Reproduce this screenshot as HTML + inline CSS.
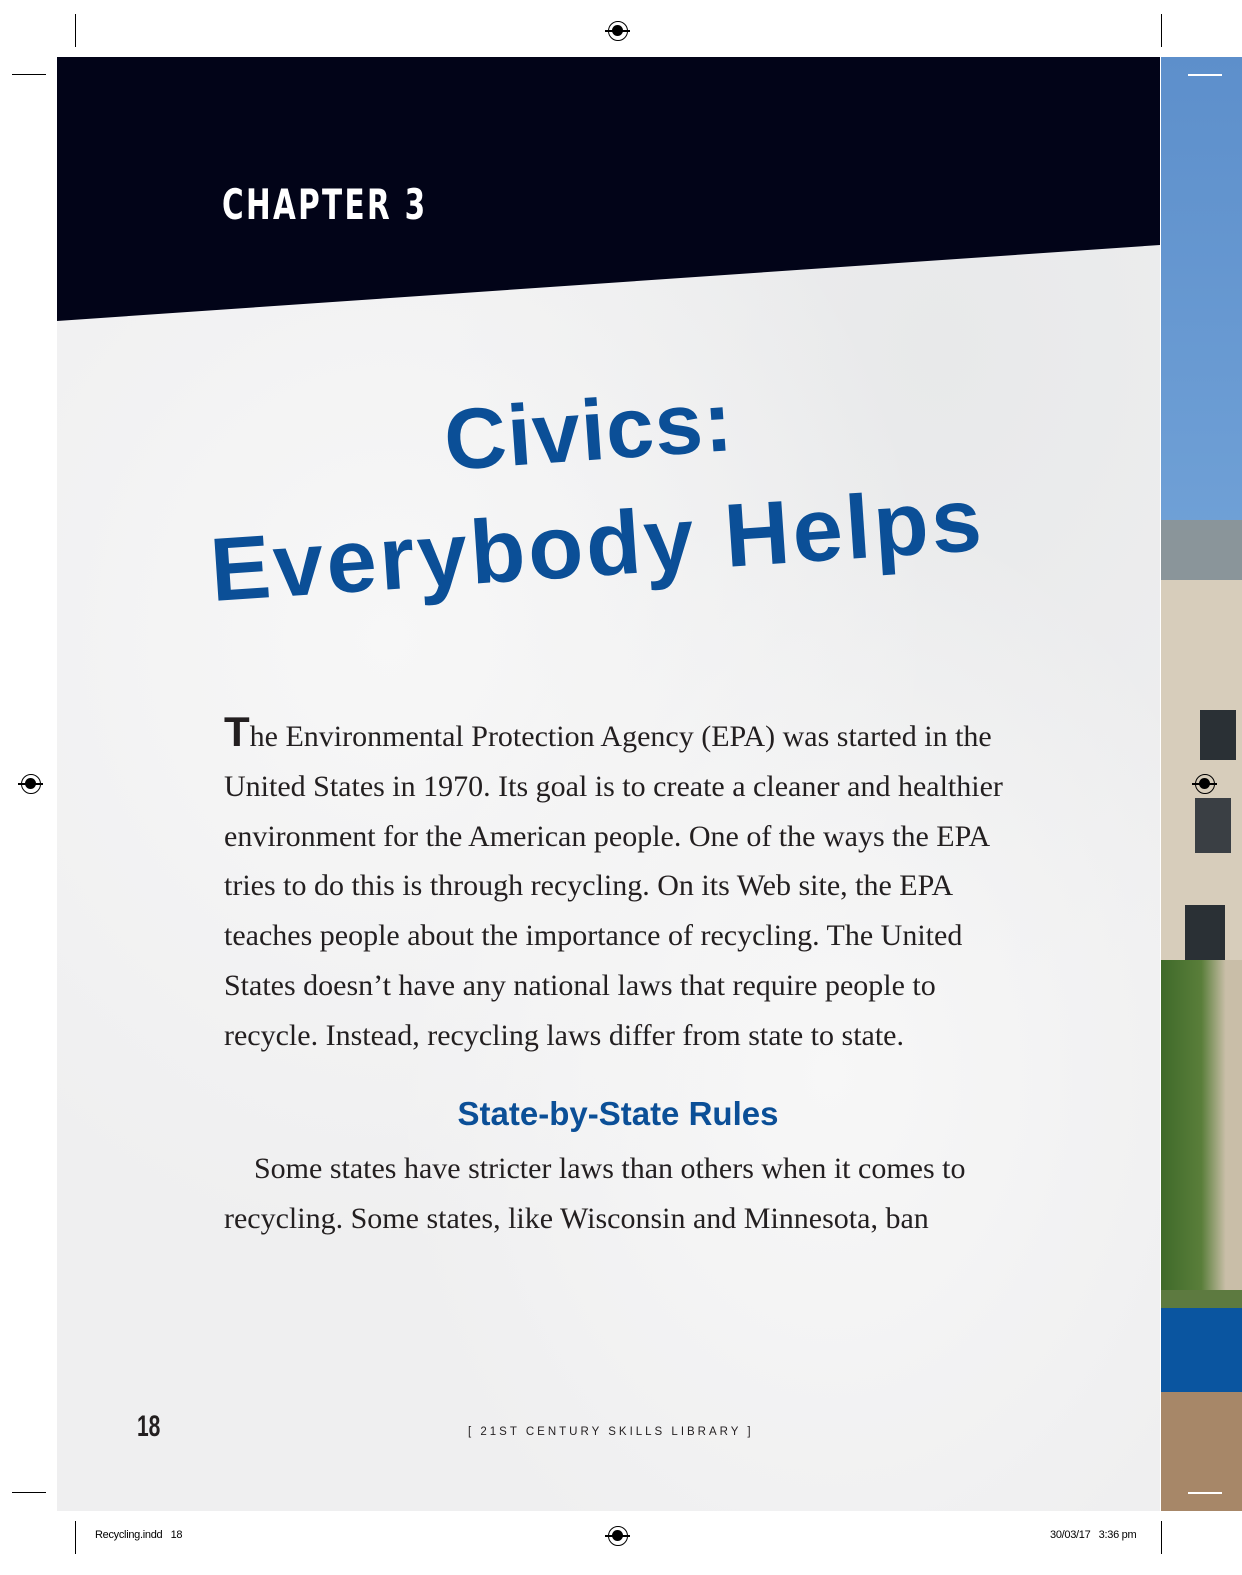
<!DOCTYPE html>
<html><head><meta charset="utf-8"><style>
body{margin:0;width:1242px;height:1575px;position:relative;background:#fff;overflow:hidden;font-family:"Liberation Sans",sans-serif}
.a{position:absolute}
.page{left:57px;top:57px;width:1103px;height:1454px;background:#efeff0;background-image:radial-gradient(ellipse at 30% 40%,#f7f7f7 0,transparent 50%),radial-gradient(ellipse at 70% 70%,#f7f7f7 0,transparent 40%),radial-gradient(ellipse at 80% 20%,#e8e9ea 0,transparent 40%)}
.line{background:#000}
.body{left:224px;top:712px;width:820px;font-family:"Liberation Serif",serif;font-size:30px;line-height:49.8px;color:#231f20}
.reg{width:20px;height:20px;border:1.5px solid #000;border-radius:50%;box-sizing:border-box}
.reg:before{content:"";position:absolute;left:3px;top:3px;width:11px;height:11px;border-radius:50%;background:#000}
.reg:after{content:"";position:absolute;left:-4px;top:8px;width:25px;height:1.5px;background:#000}
</style></head><body>
<div class="a page"></div>
<svg class="a" style="left:57px;top:57px" width="1103" height="265"><polygon points="0,0 1103,0 1103,188 0,264" fill="#020418"/></svg>
<div class="a" style="left:222px;top:180px;color:#fff;font-family:'DejaVu Sans Condensed','Liberation Sans Narrow',sans-serif;font-weight:bold;font-size:42px;letter-spacing:3px;transform:scaleX(0.78);transform-origin:left">CHAPTER 3</div>
<div class="a" style="left:448px;top:392px;color:#0b4f97;font-weight:bold;font-size:86px;transform:rotate(-4deg);transform-origin:left bottom;letter-spacing:1px">Civics:</div>
<div class="a" style="left:214px;top:520px;color:#0b4f97;font-weight:bold;font-size:90px;transform:rotate(-3.8deg);transform-origin:left bottom;letter-spacing:3px;white-space:nowrap">Everybody Helps</div>
<div class="a body"><span style="font-size:42px;font-family:'Liberation Sans';font-weight:bold;line-height:0">T</span>he Environmental Protection Agency (EPA) was started in the<br>United States in 1970. Its goal is to create a cleaner and healthier<br>environment for the American people. One of the ways the EPA<br>tries to do this is through recycling. On its Web site, the EPA<br>teaches people about the importance of recycling. The United<br>States doesn’t have any national laws that require people to<br>recycle. Instead, recycling laws differ from state to state.</div>
<div class="a" style="left:0;width:1236px;top:1095px;text-align:center;color:#0b4f97;font-weight:bold;font-size:33px">State-by-State Rules</div>
<div class="a body" style="top:1144px">&nbsp;&nbsp;&nbsp;&nbsp;Some states have stricter laws than others when it comes to<br>recycling. Some states, like Wisconsin and Minnesota, ban</div>
<div class="a" style="left:137px;top:1410px;font-weight:bold;font-size:30px;color:#231f20;transform:scaleX(0.7);transform-origin:left">18</div>
<div class="a" style="left:468px;top:1426px;font-size:11.5px;letter-spacing:3px;color:#231f20">[ 21ST CENTURY SKILLS LIBRARY ]</div>
<div class="a" style="left:1161px;top:57px;width:81px;height:470px;background:linear-gradient(#5d8fcb,#6fa0d6)"></div>
<div class="a" style="left:1161px;top:520px;width:81px;height:440px;background:#d7cdbb"></div>
<div class="a" style="left:1161px;top:520px;width:81px;height:60px;background:#8a959a"></div>
<div class="a" style="left:1200px;top:710px;width:36px;height:50px;background:#2a3035"></div>
<div class="a" style="left:1195px;top:798px;width:36px;height:55px;background:#3a3f44"></div>
<div class="a" style="left:1185px;top:905px;width:40px;height:65px;background:#2a3035"></div>
<div class="a" style="left:1161px;top:960px;width:81px;height:330px;background:linear-gradient(90deg,#3f6a2a,#5a7e3a 50%,#c9bea8 80%)"></div>
<div class="a" style="left:1161px;top:1290px;width:81px;height:18px;background:#5d7a40"></div>
<div class="a" style="left:1161px;top:1308px;width:81px;height:84px;background:#0a55a0"></div>
<div class="a" style="left:1161px;top:1392px;width:81px;height:119px;background:#a78768"></div>
<div class="a" style="left:1188px;top:74px;width:34px;height:1.5px;background:#fff"></div>
<div class="a" style="left:1188px;top:1492px;width:34px;height:1.5px;background:#fff"></div>
<div class="a line" style="left:75px;top:14px;width:1px;height:33px"></div>
<div class="a line" style="left:1161px;top:14px;width:1px;height:33px"></div>
<div class="a line" style="left:12px;top:74px;width:34px;height:1px"></div>
<div class="a line" style="left:12px;top:1492px;width:34px;height:1px"></div>
<div class="a line" style="left:75px;top:1521px;width:1px;height:33px"></div>
<div class="a line" style="left:1161px;top:1521px;width:1px;height:33px"></div>
<div class="a reg" style="left:608px;top:21px"></div>
<div class="a reg" style="left:21px;top:774px"></div>
<div class="a reg" style="left:1195px;top:774px"></div>
<div class="a reg" style="left:608px;top:1526px"></div>
<div class="a" style="left:95px;top:1529px;font-size:11px;letter-spacing:-0.3px">Recycling.indd &nbsp; 18</div>
<div class="a" style="left:1050px;top:1529px;font-size:11px;letter-spacing:-0.3px">30/03/17 &nbsp; 3:36 pm</div>
</body></html>
